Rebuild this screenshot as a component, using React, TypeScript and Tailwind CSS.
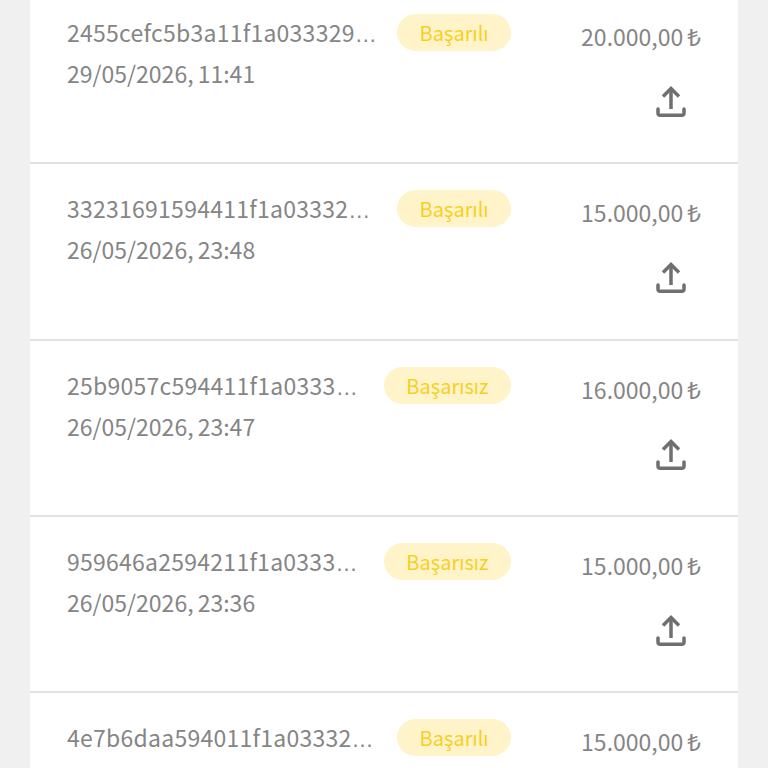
const rows = [
  { id: "2455cefc5b3a11f1a033329", date: "29/05/2026, 11:41", status: "Başarılı", amount: "20.000,00" },
  { id: "33231691594411f1a03332", date: "26/05/2026, 23:48", status: "Başarılı", amount: "15.000,00" },
  { id: "25b9057c594411f1a0333", date: "26/05/2026, 23:47", status: "Başarısız", amount: "16.000,00" },
  { id: "959646a2594211f1a0333", date: "26/05/2026, 23:36", status: "Başarısız", amount: "15.000,00" },
  { id: "4e7b6daa594011f1a03332", date: "26/05/2026, 23:11", status: "Başarılı", amount: "15.000,00" },
];

const UploadIcon = () => (
  <svg width="30" height="32" viewBox="0 0 30 32" fill="none" stroke="#6f6f6f" strokeWidth="3.5">
    <path d="M15 23V3" />
    <path d="M7 10.500L15 2.500l8 8" />
    <path d="M2 23v4c0 1.500 .8 2.300 2.300 2.300h21.400c1.500 0 2.300-.8 2.300-2.300v-4" strokeLinecap="round" />
  </svg>
);

const App = () => {
  return (
    <div className="h-[768px] overflow-hidden bg-[#f0f0f0] px-[30px] font-['Noto_Sans_CJK_SC','Noto_Sans',sans-serif]">
      <ul className="-mt-[12px] w-[708px] bg-white">
        {rows.map((row) => (
          <li key={row.id} className="flex h-[176.33px] border-b-2 border-[#e2e2e2] pl-[37px] pr-[37px] pt-[26px]">
            <div className="w-[444px]">
              <div className="flex items-start justify-between">
                <span className="whitespace-nowrap text-[23px] leading-[36px] tracking-[0.25px] text-[#858585]">
                  {row.id}
                  <span className="font-['Liberation_Sans'] text-[22px]">…</span>
                </span>
                <span className="shrink-0 rounded-full bg-[#fff3c9] px-[22.5px] text-[20px] leading-[37px] text-[#f8cf1e]">
                  {row.status}
                </span>
              </div>
              <p className="mt-[1px] text-[23px] leading-[39px] [word-spacing:-1px] text-[#858585]">{row.date}</p>
            </div>
            <div className="flex flex-1 flex-col items-end">
              <p className="mt-[2px] whitespace-nowrap text-[23px] leading-[40px] text-[#858585]">
                {row.amount}
                <span className="ml-[4px] text-[24px]">₺</span>
              </p>
              <div className="mr-[15.500px] mt-[30px]">
                <UploadIcon />
              </div>
            </div>
          </li>
        ))}
      </ul>
    </div>
  );
};

export default App;
